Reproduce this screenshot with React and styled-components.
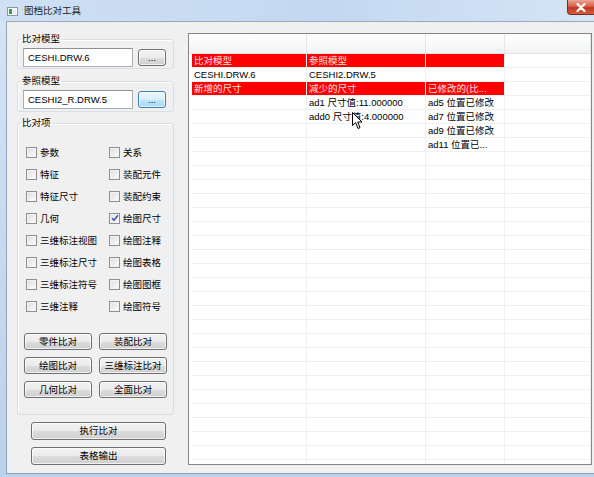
import React from "react";
import styled, { createGlobalStyle } from "styled-components";

const GlobalStyle = createGlobalStyle`
  html, body {
    margin: 0;
    padding: 0;
    background: #f0f0f0;
  }
  body {
    font-family: "Liberation Sans", "Noto Sans CJK SC", sans-serif;
    font-size: 9.5px;
    color: #000;
  }
`;

const Window = styled.div`
  width: 594px;
  height: 477px;
  overflow: hidden;
  display: flex;
  flex-direction: column;
  background: linear-gradient(180deg, #d6e5f5 0%, #c9dbef 40%, #bcd2ea 100%);
`;

const TitleBar = styled.div`
  height: 21px;
  flex: none;
  display: flex;
  align-items: flex-start;
  background: linear-gradient(90deg, #cfe0f4 0%, #c3d8f0 55%, #d5e5f7 100%);
`;

const AppIcon = styled.div`
  margin: 7px 0 0 7px;
  width: 11px;
  height: 9px;
  background: #fff;
  border: 1px solid #8a98a8;
  display: flex;
  padding: 1px;
  gap: 1px;
  box-sizing: border-box;
  span:first-child {
    width: 3px;
    background: #3f9a5a;
  }
  span:last-child {
    flex: 1;
    background: #e8eef4;
  }
`;

const Title = styled.div`
  margin: 5px 0 0 6px;
  font-size: 9.5px;
  line-height: 12px;
  color: #1e1e1e;
  flex: 1;
`;

const CloseButton = styled.div`
  width: 34px;
  height: 15px;
  margin-right: -7px;
  box-sizing: border-box;
  border: 1px solid #7a2a1f;
  border-top: none;
  border-radius: 0 0 0 4px;
  background: linear-gradient(180deg, #e9a595 0%, #d7604a 45%, #c2381f 55%, #d0603e 100%);
  display: flex;
  align-items: center;
  justify-content: center;
  padding-right: 6px;
`;

const Client = styled.div`
  flex: 1;
  margin: 0 0 3px 6px;
  border-left: 1px solid #8fa3ba;
  border-top: 1px solid #98a9bd;
  border-bottom: 1px solid #8fa3ba;
  background: #f0f0f0;
  display: flex;
  align-items: flex-start;
  padding: 11px 0 0 10px;
  gap: 14px;
`;

const LeftPanel = styled.div`
  width: 157px;
  display: flex;
  flex-direction: column;
`;

const Group = styled.fieldset`
  margin: ${(p) => p.$mt || 0}px 0 0 0;
  padding: 3px 6px ${(p) => p.$pb || 1}px 5px;
  border: 1px solid #d5dfe5;
  border-radius: 3px;
  min-width: 0;
  box-shadow: inset 1px 1px 0 #fff;
`;

const Legend = styled.legend`
  padding: 0 1px;
  margin-left: -2px;
  font-size: 9.5px;
  line-height: 12px;
  color: #000;
`;

const PathRow = styled.div`
  display: flex;
  align-items: center;
  gap: 5px;
`;

const PathInput = styled.div`
  width: 110px;
  height: 19px;
  box-sizing: border-box;
  border: 1px solid #abadb3;
  border-top-color: #8e9196;
  background: #fff;
  padding-left: 4px;
  line-height: 17px;
  font-size: 9.5px;
`;

const Button = styled.button`
  font-family: "Liberation Sans", "Noto Sans CJK SC", sans-serif;
  font-size: 9.5px;
  color: #000;
  width: ${(p) => p.$w || 68}px;
  height: ${(p) => p.$h || 17}px;
  padding: 0;
  margin: 0;
  box-sizing: border-box;
  border: 1px solid ${(p) => (p.$focus ? "#3c7fb1" : "#707070")};
  border-radius: 3px;
  background: ${(p) =>
    p.$focus
      ? "linear-gradient(180deg, #eaf6fd 0%, #d9f0fc 50%, #bee6fd 51%, #a7d9f5 100%)"
      : "linear-gradient(180deg, #f2f2f2 0%, #ebebeb 50%, #dddddd 51%, #cfcfcf 100%)"};
  box-shadow: inset 0 0 0 1px rgba(255, 255, 255, 0.7);
  line-height: 1;
  display: flex;
  align-items: center;
  justify-content: center;
`;

const CheckGrid = styled.div`
  display: grid;
  grid-template-columns: 83px 1fr;
  grid-auto-rows: 22px;
  padding: 9px 0 0 3px;
`;

const CheckItem = styled.label`
  display: flex;
  align-items: center;
  gap: 3px;
  font-size: 9.5px;
  white-space: nowrap;
`;

const Box = styled.span`
  width: 11px;
  height: 11px;
  box-sizing: border-box;
  border: 1px solid #8f8f8f;
  background: linear-gradient(135deg, #dcdcdc 0%, #f4f4f4 70%, #fbfbfb 100%);
  box-shadow: inset 0 0 0 1px #f4f4f4;
  display: flex;
  align-items: center;
  justify-content: center;
`;

const ButtonGrid = styled.div`
  display: grid;
  grid-template-columns: 68px 68px;
  column-gap: 7px;
  row-gap: 7px;
  margin-top: 16px;
  padding-left: 1px;
`;

const ActionButtons = styled.div`
  display: flex;
  flex-direction: column;
  gap: 7px;
  margin: 7px 0 0 14px;
`;

const Table = styled.div`
  position: relative;
  width: 404px;
  height: 432px;
  box-sizing: border-box;
  border: 1px solid #828790;
  background: #fff;
  overflow: hidden;
`;

const Row = styled.div`
  display: grid;
  grid-template-columns: 3px 115px 119px 79px 1fr;
  height: ${(p) => (p.$header ? 19 : 14)}px;
  background: ${(p) => (p.$header ? "linear-gradient(180deg, #ffffff 0%, #f7f8f9 60%, #f1f2f4 100%)" : "#fff")};
  border-bottom: ${(p) => (p.$header ? "1px solid #e3e4e6" : "none")};
`;

const Cell = styled.div`
  box-sizing: border-box;
  height: 14px;
  line-height: 14px;
  padding-left: 2px;
  border-right: 1px solid #f0f0f0;
  border-bottom: 1px solid #f0f0f0;
  background: ${(p) => (p.$red ? "#ff0000" : "transparent")};
  color: ${(p) => (p.$red ? "#ffe3e3" : "#000")};
  white-space: nowrap;
  overflow: hidden;
  font-size: 9.5px;
`;

const HeadCell = styled.div`
  height: 19px;
  box-sizing: border-box;
  border-right: 1px solid #e5e5e5;
`;

const Gutter = styled.div`
  height: 100%;
`;

const Cursor = styled.svg`
  position: absolute;
  left: 163px;
  top: 78px;
`;

const checks = [
  ["参数", false],
  ["关系", false],
  ["特征", false],
  ["装配元件", false],
  ["特征尺寸", false],
  ["装配约束", false],
  ["几何", false],
  ["绘图尺寸", true],
  ["三维标注视图", false],
  ["绘图注释", false],
  ["三维标注尺寸", false],
  ["绘图表格", false],
  ["三维标注符号", false],
  ["绘图图框", false],
  ["三维注释", false],
  ["绘图符号", false],
];

const compareButtons = ["零件比对", "装配比对", "绘图比对", "三维标注比对", "几何比对", "全面比对"];

const rows = [
  { red: true, cells: ["比对模型", "参照模型", "", ""] },
  { cells: ["CESHI.DRW.6", "CESHI2.DRW.5", "", ""] },
  { red: true, cells: ["新增的尺寸", "减少的尺寸", "已修改的(比...", ""] },
  { cells: ["", "ad1 尺寸值:11.000000", "ad5 位置已修改", ""] },
  { cells: ["", "add0 尺寸值:4.000000", "ad7 位置已修改", ""] },
  { cells: ["", "", "ad9 位置已修改", ""] },
  { cells: ["", "", "ad11 位置已...", ""] },
];

while (rows.length < 30) rows.push({ cells: ["", "", "", ""] });

function Check({ label, checked }) {
  return (
    <CheckItem>
      <Box>
        {checked && (
          <svg width="8" height="8" viewBox="0 0 8 8">
            <path d="M1 4.2 L3 6.3 L7 1.2" fill="none" stroke="#2b4fa8" strokeWidth="1.4" />
          </svg>
        )}
      </Box>
      {label}
    </CheckItem>
  );
}

export default function App() {
  return (
    <>
      <GlobalStyle />
      <Window>
        <TitleBar>
          <AppIcon>
            <span />
            <span />
          </AppIcon>
          <Title>图档比对工具</Title>
          <CloseButton>
            <svg width="10" height="9" viewBox="0 0 10 9">
              <path d="M1.5 1 L8.5 8 M8.5 1 L1.5 8" stroke="#fff" strokeWidth="2.2" strokeLinecap="round" />
            </svg>
          </CloseButton>
        </TitleBar>
        <Client>
          <LeftPanel>
            <Group>
              <Legend>比对模型</Legend>
              <PathRow>
                <PathInput>CESHI.DRW.6</PathInput>
                <Button $w={28}>...</Button>
              </PathRow>
            </Group>
            <Group $mt={6} $pb={2}>
              <Legend>参照模型</Legend>
              <PathRow>
                <PathInput>CESHI2_R.DRW.5</PathInput>
                <Button $w={28} $focus>
                  ...
                </Button>
              </PathRow>
            </Group>
            <Group $mt={5} $pb={16}>
              <Legend>比对项</Legend>
              <CheckGrid>
                {checks.map(([label, checked]) => (
                  <Check key={label} label={label} checked={checked} />
                ))}
              </CheckGrid>
              <ButtonGrid>
                {compareButtons.map((b) => (
                  <Button key={b}>{b}</Button>
                ))}
              </ButtonGrid>
            </Group>
            <ActionButtons>
              <Button $w={135} $h={18}>
                执行比对
              </Button>
              <Button $w={135} $h={18}>
                表格输出
              </Button>
            </ActionButtons>
          </LeftPanel>
          <Table>
            <Row $header>
              <Gutter />
              <HeadCell />
              <HeadCell />
              <HeadCell />
              <HeadCell />
            </Row>
            {rows.map((r, i) => (
              <Row key={i}>
                <Gutter />
                {r.cells.map((c, j) => (
                  <Cell key={j} $red={r.red && j < 3}>
                    {c}
                  </Cell>
                ))}
              </Row>
            ))}
            <Cursor width="12" height="18" viewBox="0 0 12 18">
              <path
                d="M0.5 0.5 L0.5 13.5 L3.6 10.6 L6 16.5 L8 15.6 L5.7 10 L10 10 Z"
                fill="#fff"
                stroke="#000"
                strokeWidth="1"
                strokeLinejoin="round"
              />
            </Cursor>
          </Table>
        </Client>
      </Window>
    </>
  );
}
